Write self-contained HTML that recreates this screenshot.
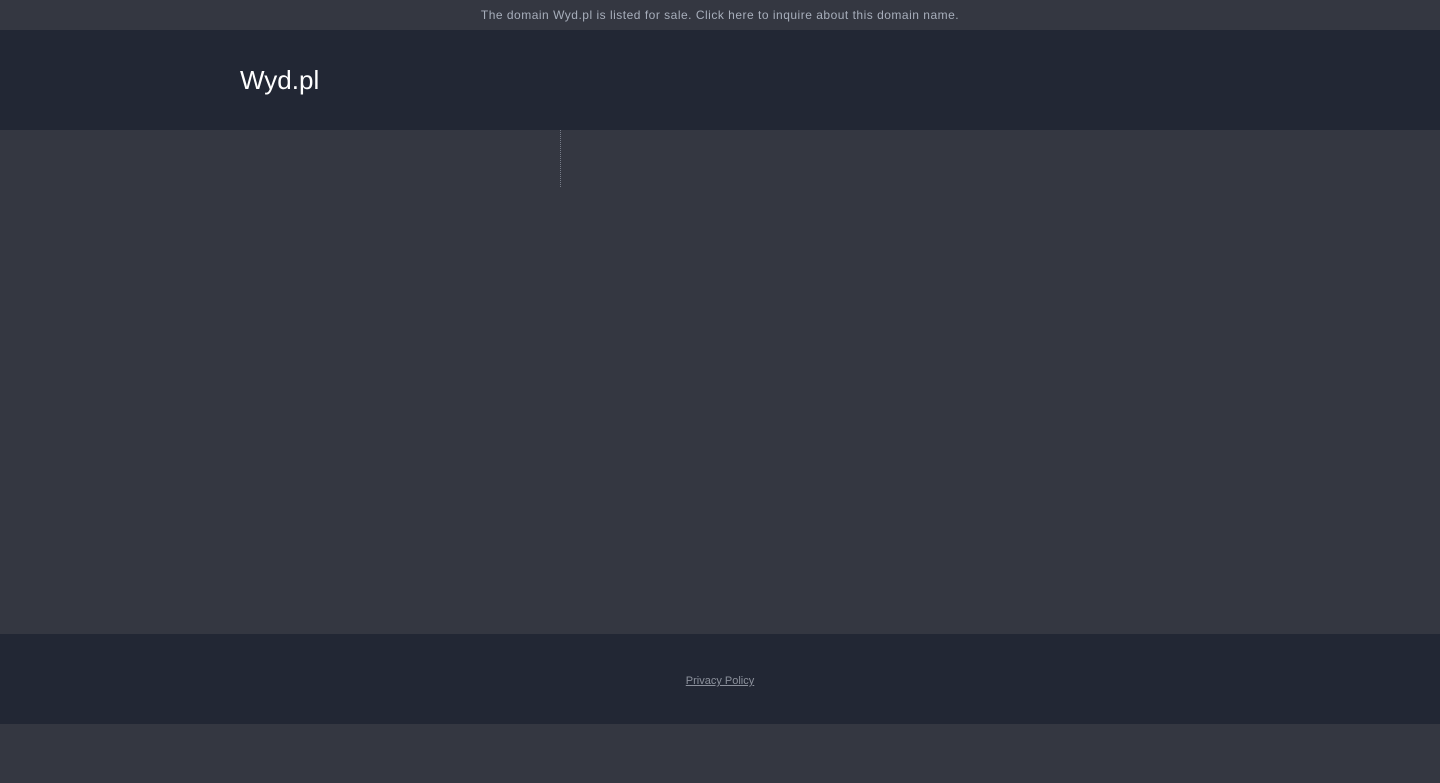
<!DOCTYPE html>
<html><head><meta charset="utf-8"><style>
html,body{margin:0;padding:0;width:1440px;height:783px;background:#343741;font-family:"Liberation Sans",Arial,sans-serif;overflow:hidden}
.top{height:30px;background:#343741;color:#a7aebb;font-size:12px;text-align:center;line-height:31px;letter-spacing:0.5px}
.hdr{height:100px;background:#222734;position:relative}
.hdr span{display:block;position:absolute;left:240px;top:50px;transform:translateY(-50%);color:#fff;font-size:26px;line-height:30px}
.main{height:504px;background:#343741;position:relative}
.main i{position:absolute;left:560px;top:0;height:57px;border-left:1px dotted #777c88}
.ftr{height:90px;background:#222734;text-align:center}
.ftr a{display:inline-block;margin-top:41px;color:#8c919c;font-size:11px;text-decoration:underline}
</style></head><body>
<div class="top">The domain Wyd.pl is listed for sale. Click here to inquire about this domain name.</div>
<div class="hdr"><span>Wyd.pl</span></div>
<div class="main"><i></i></div>
<div class="ftr"><a>Privacy Policy</a></div>
</body></html>
